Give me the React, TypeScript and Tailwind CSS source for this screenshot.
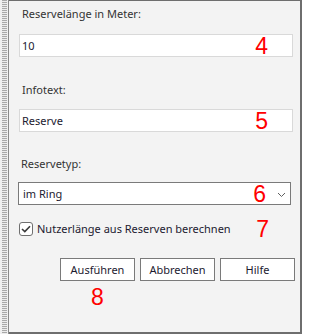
import React from 'react';

const font = { fontFamily: '"Noto Sans", "Open Sans", sans-serif' };

function Mark({ n }: { n: string }) {
  // red annotation digit lying over the control
  return (
    <span className="absolute right-[24px] top-1/2 -translate-y-1/2 text-[23px] leading-none text-[#ff0000] font-['Liberation_Sans',Arial,sans-serif]">
      {n}
    </span>
  );
}

export default function App() {
  return (
    <div className="flex w-[302px] h-[334px] bg-white text-[11px] leading-[16px]" style={font}>
      {/* gripper strip */}
      <div className="w-[9px] h-full flex">
        <div className="w-[2px] bg-[#f0f0f0]" />
        <div className="w-[5px] bg-[repeating-linear-gradient(to_bottom,#a9a9a9_0px,#a9a9a9_1px,#ececec_1px,#ececec_2px)]" />
        <div className="w-[1px] bg-[#f0f0f0]" />
        <div className="w-[1px] bg-[#8a8a8a]" />
      </div>

      <div className="flex-1 flex flex-col bg-[#f3f3f3] border-t border-r-2 border-b-2 border-[#6e6e6e] pl-[10px] pr-[7px] pt-[5px]">
        <div className="pl-[3px] text-[#333]">Reservelänge in Meter:</div>
        <div className="relative mt-[12px] h-[23px] bg-white border border-[#d9d9d9] pl-[2px] flex items-center text-[#1c1a30]">
          10
          <Mark n="4" />
        </div>

        <div className="pl-[3px] mt-[25px] text-[#333]">Infotext:</div>
        <div className="relative mt-[11px] h-[23px] bg-white border border-[#d9d9d9] pl-[2px] flex items-center text-[#1c1a30]">
          Reserve
          <Mark n="5" />
        </div>

        <div className="pl-[2px] mt-[24px] text-[#333]">Reservetyp:</div>
        <div className="relative mt-[10px] -ml-[1px] mr-[2px] h-[23px] bg-white border border-[#7a7a7a] pl-[4px] flex items-center text-[#1c1a30]">
          im Ring
          <Mark n="6" />
          <svg className="absolute right-[4px] top-[9px]" width="9" height="6" viewBox="0 0 9 6">
            <path d="M1 1 L4.5 4.5 L8 1" fill="none" stroke="#606060" strokeWidth="1" />
          </svg>
        </div>

        <div className="relative mt-[17px] flex items-center h-[14px]">
          <div className="w-[14px] h-[14px] rounded-[3px] border border-[#6f6f6f] bg-white flex items-center justify-center">
            <svg width="10" height="8" viewBox="0 0 10 8">
              <path d="M1 4 L3.8 6.6 L9 1.2" fill="none" stroke="#3a3a3a" strokeWidth="1.6" />
            </svg>
          </div>
          <span className="ml-[4px] text-[#1c1a30]">Nutzerlänge aus Reserven berechnen</span>
          <Mark n="7" />
        </div>

        <div className="mt-[22px] -mr-[2px] flex justify-end gap-[5px]">
          <button className="relative w-[75px] h-[23px] bg-white border border-[#7a7a7a] text-[#1c1a30]">
            Ausführen
            <span className="absolute left-1/2 -translate-x-1/2 top-[27px] text-[23px] leading-none text-[#ff0000] font-['Liberation_Sans',Arial,sans-serif]">
              8
            </span>
          </button>
          <button className="w-[75px] h-[23px] bg-white border border-[#7a7a7a] text-[#1c1a30]">Abbrechen</button>
          <button className="w-[75px] h-[23px] bg-white border border-[#7a7a7a] text-[#1c1a30]">Hilfe</button>
        </div>
      </div>
    </div>
  );
}
